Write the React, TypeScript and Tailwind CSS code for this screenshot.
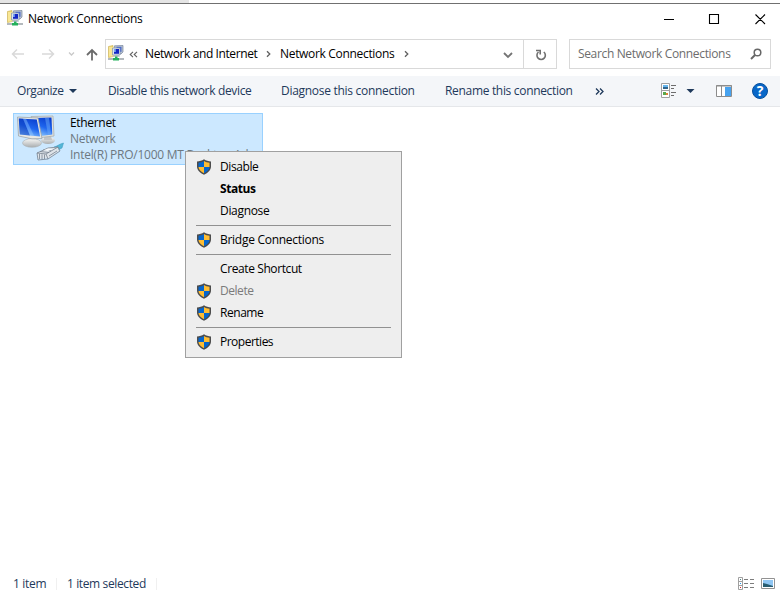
import React from 'react';

function NetIcon() {
  return (
    <svg width="16" height="16" viewBox="0 0 16 16" className="shrink-0">
      <path d="M0.5 1.500 5 .5v11l-4.500 1z" fill="#f3d970" stroke="#cdb45c" strokeWidth=".7" />
      <path d="M1 2h5v9.500H1z" fill="#f9e795" />
      <path d="M6.500 .8 15 .5v6.500l-2 2H7z" fill="#b9c3d0" stroke="#75849b" strokeWidth=".7" />
      <path d="M8.500 1.800h5v5h-5z" fill="#4a68cf" />
      <path d="M4.500 3h7.500v7H4.500z" fill="#dfe5ee" stroke="#7d8fae" strokeWidth=".7" />
      <path d="M6 4h5v4.800H6z" fill="#1226c4" />
      <path d="M6 4h1.800v3H6z" fill="#7ba4f3" />
      <path d="M6 10.500h5l1 1H5z" fill="#8995a8" />
      <path d="M0 13h16v2H0z" fill="#b3b9bd" />
      <path d="M7 11.500h2.500V13H11v2.500H5V13h2z" fill="#25b15c" />
    </svg>
  );
}

function Shield() {
  return (
    <svg width="16" height="16" viewBox="0 0 16 16" className="shrink-0">
      <path d="M8 .3C6 1.800 3.500 2.300 1 2.400V7.500c0 3.700 3 6.500 7 8.200 4-1.700 7-4.500 7-8.200V2.400C12.500 2.300 10 1.800 8 .3z" fill="#4c4c4c" />
      <path d="M8 2C6.400 3 4.500 3.500 2.500 3.700V8H8z" fill="#0566ce" />
      <path d="M8 2c1.600 1 3.500 1.500 5.500 1.700V8H8z" fill="#ffbd32" />
      <path d="M2.500 8H8v6.200C5 12.700 2.700 10.800 2.500 8z" fill="#ffbd32" />
      <path d="M13.500 8H8v6.200c3-1.500 5.300-3.400 5.500-6.200z" fill="#0566ce" />
    </svg>
  );
}

function Adapter() {
  return (
    <svg width="50" height="50" viewBox="0 0 50 50" className="shrink-0">
      <defs>
        <linearGradient id="screen" x1=".7" y1="0" x2=".3" y2="1">
          <stop offset="0" stopColor="#0a3fcf" />
          <stop offset=".5" stopColor="#1f66ee" />
          <stop offset="1" stopColor="#8fcbff" />
        </linearGradient>
        <linearGradient id="metal" x1="0" y1="0" x2="0" y2="1">
          <stop offset="0" stopColor="#f8f8f6" />
          <stop offset="1" stopColor="#a9adb0" />
        </linearGradient>
      </defs>
      <ellipse cx="34" cy="26.500" rx="7" ry="3.500" fill="url(#metal)" />
      <path d="M30 22h7l1 4h-8z" fill="#c3c6c8" />
      <path d="m17 2.500 22-.5 1 20-13 1.500z" fill="#e2e2dc" stroke="#aaaeb0" strokeWidth=".8" />
      <path d="m19 4 18.500-.5.800 17L27 22z" fill="url(#screen)" />
      <path d="M31 4h4l2 16-3 1z" fill="#6cabfa" opacity=".5" />
      <path d="m14 22 8 1 1 6h-8z" fill="#c4c7c9" />
      <ellipse cx="18" cy="29" rx="9.500" ry="4.300" fill="url(#metal)" stroke="#adb1b4" strokeWidth=".6" />
      <path d="m3.500 3 20.500 1 4 20.500-10 .3L4.500 22z" fill="#e8e8e3" stroke="#9da6ac" strokeWidth=".8" />
      <path d="m4.800 4.500 18 1 3.300 17L5.800 20.500z" fill="url(#screen)" />
      <path d="M4.800 4.500 9 4.800l7 16.700-10.200-1z" fill="#0838b8" opacity=".5" />
      <path d="M9 4.800h3l8 17-4-.4z" fill="#9ccfff" opacity=".4" />
      <path d="M40 33c4-1 5-3 9.500-4l-1.500 5-6 3z" fill="#54b6d6" stroke="#3999be" strokeWidth=".5" />
      <path d="m23 39 10-5 11-1 1 4-10 7-11 1z" fill="#dfe4e9" />
      <path d="m23 39 9 1 2 5-10 1zM23 39l11-5 10-1 2 4-12 8M32 40l12-7M26 37.500l9 1M29 36l8 .8M25.500 40v5M28 40.300v5M30.500 40.500v4.500M35 42l8-5" fill="none" stroke="#76828f" strokeWidth=".8" />
      <path d="m29 36.500 5-2 5 .5-5 2z" fill="#f6f9fc" />
    </svg>
  );
}

function Chevron({ className = '' }: { className?: string }) {
  return (
    <svg width="5" height="8" viewBox="0 0 5 8" className={`shrink-0 ${className}`}>
      <path d="M1 1.200l2.800 2.800L1 6.800" fill="none" stroke="#606060" strokeWidth="1.300" />
    </svg>
  );
}

function MenuItem({ label, shield, cls = '' }: { label: string; shield?: boolean; cls?: string }) {
  return (
    <div className={`flex h-[22px] items-center pl-[10px] ${cls}`}>
      <div className="w-[24px]">{shield && <Shield />}</div>
      <span>{label}</span>
    </div>
  );
}

function Separator() {
  return <div className="mx-[10px] my-[3px] h-px bg-[#919191]" />;
}

export default function App() {
  return (
    <div className="flex h-[595px] w-[780px] flex-col overflow-hidden whitespace-nowrap bg-white font-['Open_Sans','Noto_Sans',sans-serif] text-[12px] leading-4 tracking-[-0.32px] text-black">
      <div className="h-[3px] w-[189px] shrink-0 bg-[#e5e5e5]" />
      <div className="h-px shrink-0 bg-[#707070]" />
      <header className="flex h-[31px] shrink-0 items-center pl-[7px]">
        <div className="-mt-[3px]"><NetIcon /></div>
        <span className="ml-[5px] -mt-px">Network Connections</span>
        <svg width="120" height="20" viewBox="0 0 120 20" className="-mt-[3px] ml-auto">
          <path d="M4 11.500h10M49.500 6.500h9v9h-9zM95.500 6.500l9.500 9.500M105 6.500L95.500 16" fill="none" stroke="#000" strokeWidth="1.100" />
        </svg>
      </header>

      <nav className="flex h-[41px] shrink-0 items-start pt-[4px]">
        <svg width="105" height="30" viewBox="0 0 105 30" className="shrink-0" fill="none">
          <path d="M24 15H12.500M17 10.500 12.500 15l4.500 4.500" stroke="#d9d9d9" strokeWidth="1.500" />
          <path d="M42 15h11.500M49 10.500l4.500 4.500-4.500 4.500" stroke="#d9d9d9" strokeWidth="1.500" />
          <path d="m69 13.500 2.500 2.500 2.500-2.500" stroke="#c9c9c9" strokeWidth="1.300" />
          <path d="M92 21.500V11M87 16l5-5 5 5" stroke="#6b6b6b" strokeWidth="1.800" />
        </svg>
        <div className="flex h-[30px] w-[452px] shrink-0 items-center border border-[#d9d9d9]">
          <div className="-mt-[2px] ml-[2px]"><NetIcon /></div>
          <svg width="9" height="7" viewBox="0 0 9 7" className="ml-[5px] shrink-0" fill="none" stroke="#606060" strokeWidth="1.100">
            <path d="m4 .8-2.800 2.700L4 6.200M8 .8 5.200 3.500 8 6.200" />
          </svg>
          <span className="ml-[7px] w-[114px] tracking-[-0.4px]">Network and Internet</span>
          <Chevron className="ml-[7px]" />
          <span className="ml-[9px] w-[116px]">Network Connections</span>
          <Chevron className="ml-[8px]" />
          <svg width="10" height="7" viewBox="0 0 10 7" className="ml-auto mr-[10px] mt-[2px]">
            <path d="m1 1 4 4 4-4" fill="none" stroke="#747474" strokeWidth="1.800" />
          </svg>
          <div className="flex h-full w-[33px] items-center justify-center border-l border-[#d9d9d9]">
            <svg width="12" height="12" viewBox="0 0 12 12" className="ml-px mt-px" fill="none" stroke="#707070" strokeWidth="1.600">
              <path d="M8.800 3A4.200 4.200 0 1 1 3.500 3M1 1.500h4.200V5.500" />
            </svg>
          </div>
        </div>
        <div className="ml-[12px] flex h-[30px] w-[202px] shrink-0 items-center justify-between border border-[#d9d9d9] px-[8px] text-[#6d6d6d]">
          <span className="tracking-[-0.35px]">Search Network Connections</span>
          <svg width="12" height="12" viewBox="0 0 12 12" fill="none" stroke="#676767" strokeWidth="1.500">
            <circle cx="7.500" cy="4.500" r="3.300" />
            <path d="M5 7 1 11" strokeWidth="2" />
          </svg>
        </div>
      </nav>

      <div className="flex h-[31px] shrink-0 items-center border-b border-[#e5e7ea] bg-[#f4f6f9] pl-[17px] text-[#1e395b]">
        <span className="w-[48px] tracking-[-0.45px]">Organize</span>
        <svg width="8" height="4" className="ml-[4px] shrink-0"><path d="M0 0h8L4 4z" fill="#1e395b" /></svg>
        <span className="ml-[31px] w-[144px] tracking-[-0.34px]">Disable this network device</span>
        <span className="ml-[29px] w-[134px] tracking-[-0.29px]">Diagnose this connection</span>
        <span className="ml-[30px] w-[129px]">Rename this connection</span>
        <svg width="9" height="7" viewBox="0 0 9 7" className="ml-[21px] shrink-0" fill="none" stroke="#1e395b" strokeWidth="1.300"><path d="m1 .5 3 3-3 3m4-6 3 3-3 3" /></svg>
        <svg width="110" height="30" viewBox="660 76 110 30" className="ml-auto mr-[10px] shrink-0" fill="none">
          <path d="M661.500 83.500h8v14h-8zM661 90.500h9" fill="#fff" stroke="#a0a0a0" />
          <path d="M663 85h5v2h-5z" fill="#65b5ed" /><path d="M663 87h5v2h-5z" fill="#31658c" />
          <path d="M663 92h3v3h-3z" fill="#5aa74c" /><path d="M666 93h2v2h-2z" fill="#e38236" />
          <path d="M671 85.500h5M671 88.500h3M671 92.500h5M671 95.500h3" stroke="#6d6d6d" />
          <path d="M686.500 89h8l-4 4z" fill="#1e395b" />
          <path d="M716.500 85.500h15v11h-15z" fill="#fff" stroke="#8c8c8c" />
          <path d="M716 86h16M721.500 86v10" stroke="#8c8c8c" />
          <path d="M725 87h6v9h-6z" fill="#47a2ef" />
          <circle cx="760" cy="91" r="7.500" fill="#0867c8" stroke="#064f9d" />
          <text x="760" y="96" textAnchor="middle" fill="#fff" fontSize="14" fontWeight="700" fontFamily="Open Sans">?</text>
        </svg>
      </div>

      <main className="grow pl-[13px] pt-[6px]">
        <div className="relative h-[52px] w-[250px] border border-[#99d1ff] bg-[#cce8ff]">
          <div className="flex">
            <Adapter />
            <div className="ml-[6px] pt-[1px] text-[#6d7881]">
              <div className="text-black">Ethernet</div>
              <div>Network</div>
              <div className="tracking-[-0.25px]">Intel(R) PRO/1000 MT Desktop Ad...</div>
            </div>
          </div>
          <div className="absolute left-[171px] top-[37px] z-10 h-[207px] w-[217px] border border-[#a0a0a0] bg-[#eeeeee] pt-[4px]">
            <MenuItem label="Disable" shield cls="tracking-[-0.4px]" />
            <MenuItem label="Status" cls="font-bold tracking-[-0.45px]" />
            <MenuItem label="Diagnose" />
            <Separator />
            <MenuItem label="Bridge Connections" shield cls="tracking-[-0.28px]" />
            <Separator />
            <MenuItem label="Create Shortcut" cls="tracking-[-0.4px]" />
            <MenuItem label="Delete" shield cls="text-[#7b7b7b] tracking-[-0.45px]" />
            <MenuItem label="Rename" shield cls="tracking-[-0.45px]" />
            <Separator />
            <MenuItem label="Properties" shield cls="tracking-[-0.5px]" />
          </div>
        </div>
      </main>

      <footer className="flex h-[23px] shrink-0 items-center pl-[13px] text-[#1e395b]">
        <span className="w-[33px]">1 item</span>
        <div className="ml-[10px] h-[12px] w-px bg-[#f0f0f0]" />
        <span className="ml-[10px] w-[80px] tracking-[-0.38px]">1 item selected</span>
        <div className="ml-[9px] h-[12px] w-px bg-[#f0f0f0]" />
        <svg width="40" height="16" viewBox="737 575 40 16" className="ml-auto mr-[3px]" fill="none">
          <path d="M738.500 576.500h4v12h-4zM738 580.500h5M738 584.500h5" stroke="#a0a0a0" />
          <path d="M740 578h1v1h-1z" fill="#4f7e7e" /><path d="M740 582h1v1h-1z" fill="#269af0" /><path d="M740 586h1v1h-1z" fill="#df2525" />
          <path d="M744 578.500h4m2 0h4M744 582.500h4m2 0h4M744 586.500h4m2 0h4" stroke="#7d7d7d" />
          <path d="M761.500 577.500h13v10h-13z" fill="#fff" stroke="#929292" />
          <path d="M763 579h10v7h-10z" fill="#8fc6f3" /><path d="M763 582l4 1 6 2v1h-10z" fill="#285d71" />
        </svg>
      </footer>
    </div>
  );
}
